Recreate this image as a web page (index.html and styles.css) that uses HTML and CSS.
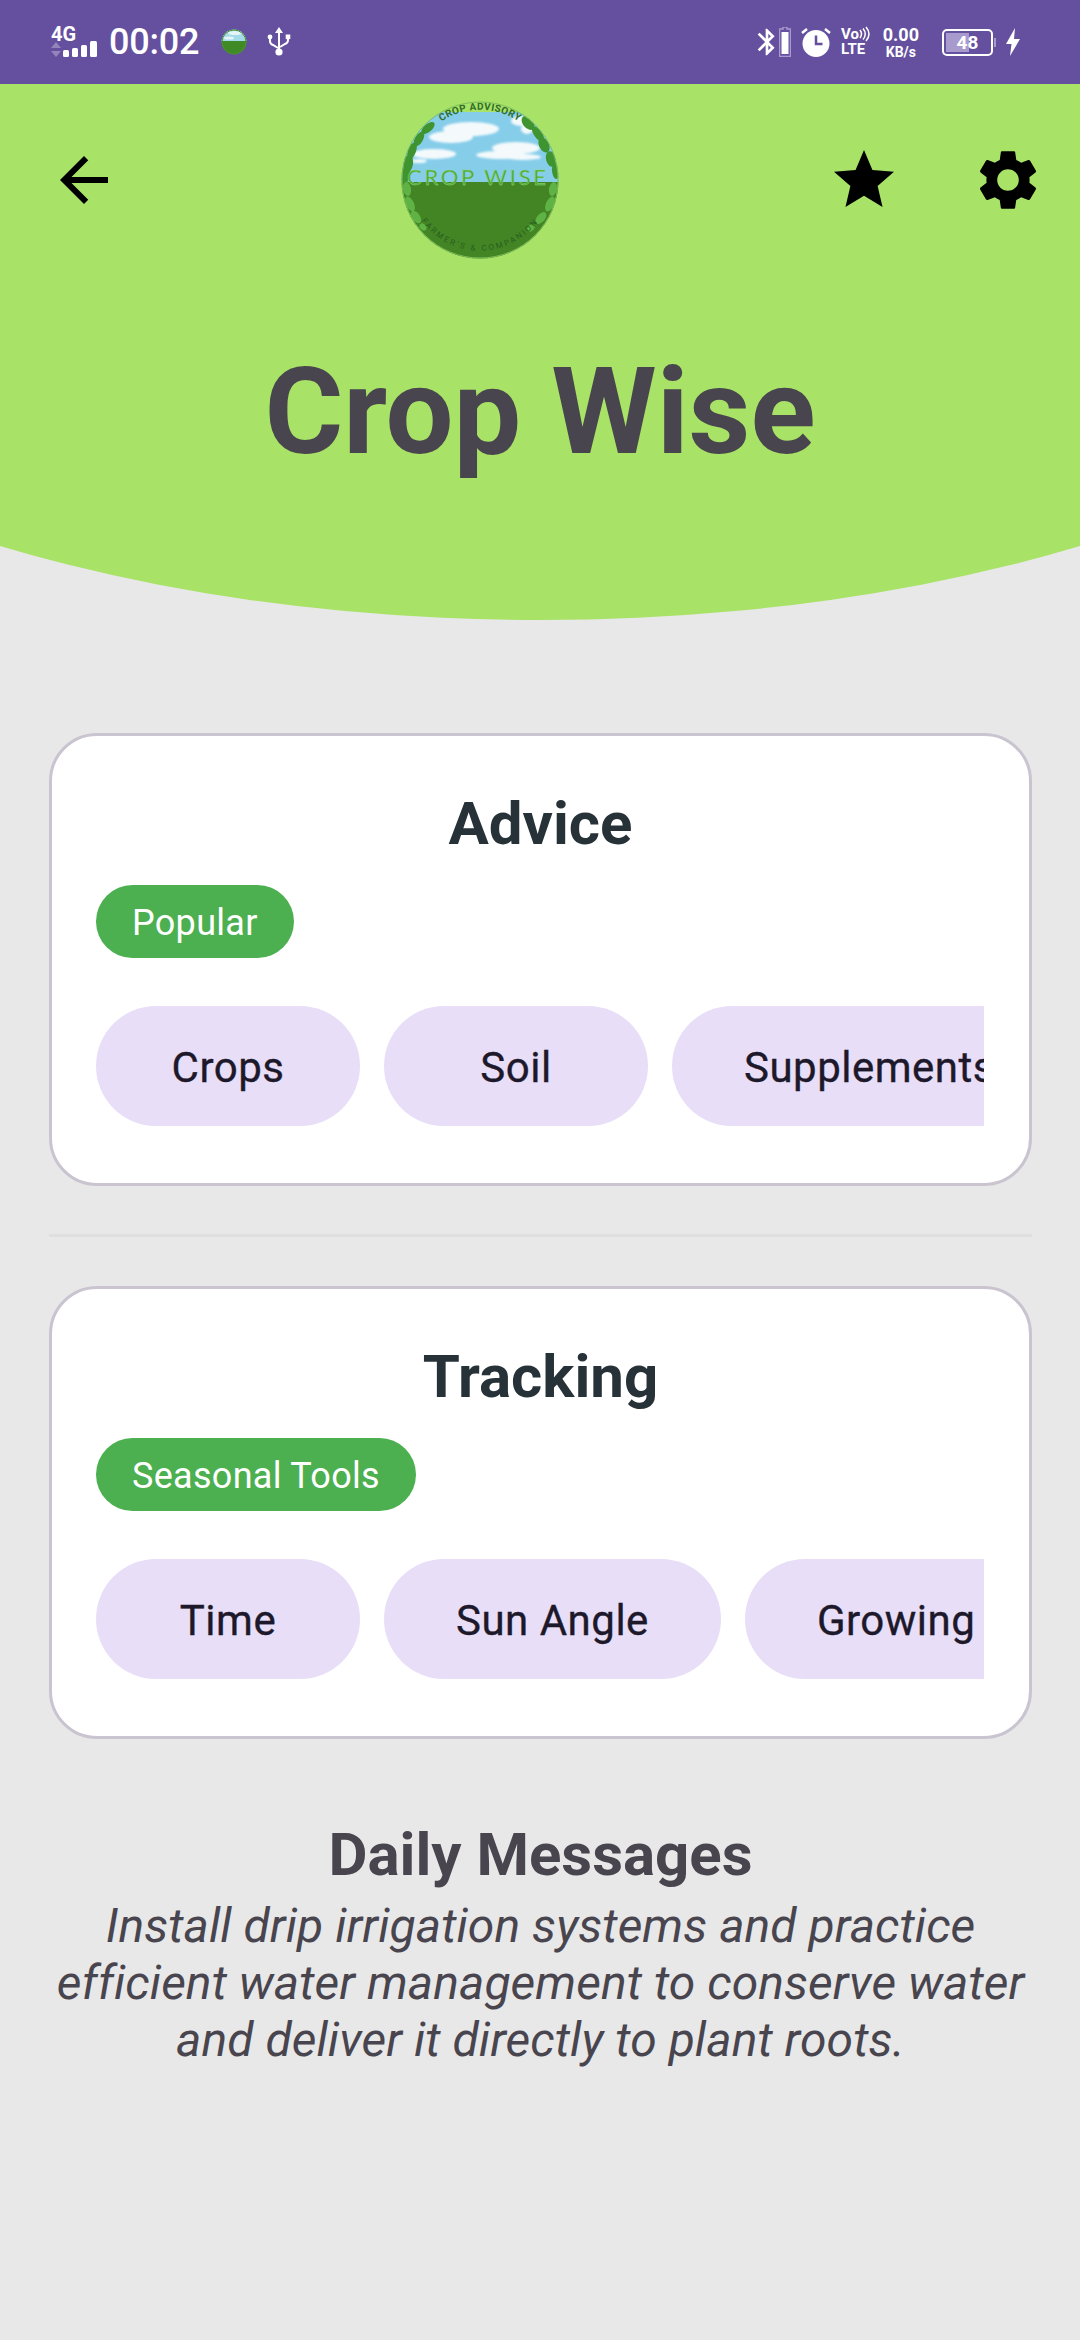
FILE: index.html
```html
<!DOCTYPE html>
<html>
<head lang="en">
    <meta charset="UTF-8">
    <title>Crop Wise</title>
    <link rel="stylesheet" href="styles.css">
</head>
<body>
    <div class="status-bar">
        <svg class="sb-net" width="48" height="34" viewBox="0 0 48 34">
            <text x="0" y="16" class="sb-4g">4G</text>
            <path d="M5 17l5 6H0zM5 32l5-6H0z" fill="#fff" opacity=".3"/>
            <rect x="12" y="25" width="6" height="7" rx="1.5" fill="#fff"/>
            <rect x="21" y="23" width="6" height="9" rx="1.5" fill="#fff"/>
            <rect x="30" y="20" width="6" height="12" rx="1.5" fill="#fff"/>
            <rect x="39" y="16" width="7" height="16" rx="1.5" fill="#fff"/>
        </svg>
        <span class="sb-time">00:02</span>
        <svg class="sb-mini" width="26" height="26" viewBox="0 0 26 26">
            <defs><clipPath id="miniClip"><circle cx="13" cy="13" r="12.5"/></clipPath></defs>
            <g clip-path="url(#miniClip)">
                <rect width="26" height="26" fill="#3f8a25"/>
                <rect width="26" height="12" fill="#a5dbe8"/>
                <ellipse cx="14" cy="4" rx="7" ry="2" fill="#e4f4f7"/>
                <ellipse cx="8" cy="9" rx="5" ry="1.500" fill="#e4f4f7"/>
            </g>
            <circle cx="13" cy="13" r="12" fill="none" stroke="#4f8f3a" stroke-width="1"/>
        </svg>
        <svg class="sb-usb" width="24" height="32" viewBox="0 0 24 32">
            <path d="M12 1l4 6h-3v17h-2V7H8z" fill="#fff"/>
            <circle cx="12" cy="26" r="3.6" fill="#fff"/>
            <path d="M3 11v4q0 3 3 4l5 3M21 11v3q0 3-3 4l-5 3" fill="none" stroke="#fff" stroke-width="2"/>
            <circle cx="3" cy="11" r="2.4" fill="#fff"/>
            <rect x="18.7" y="8.5" width="4.6" height="4.6" fill="#fff"/>
        </svg>

        <div class="sb-right">
            <svg class="sb-bt" width="32" height="32" viewBox="0 0 24 24">
                <path d="M17.71 7.71 12 2h-1v7.59L6.41 5 5 6.41 10.59 12 5 17.59 6.41 19 11 14.41V22h1l5.71-5.71-4.3-4.29 4.3-4.29zM13 5.83l1.88 1.88L13 9.59V5.83zm1.88 10.46L13 18.17v-3.76l1.88 1.88z" fill="#fff"/>
            </svg>
            <svg class="sb-cell" width="12" height="30" viewBox="0 0 12 30">
                <path d="M4 0h4v2h3.5v27.500H.5V2H4z" fill="none" stroke="#a99ace" stroke-width="1.500"/>
                <rect x="2.500" y="5" width="7" height="22" fill="#fff"/>
            </svg>
            <svg class="sb-alarm" width="30" height="30" viewBox="0 0 30 30">
                <circle cx="15" cy="16.500" r="13.500" fill="#fff"/>
                <path d="M15 8.500v8.500h6.500" fill="none" stroke="#65509f" stroke-width="2.500"/>
                <path d="M1 6l5-4M29 6l-5-4" fill="none" stroke="#fff" stroke-width="2.500"/>
            </svg>
            <svg class="sb-volte" width="30" height="30" viewBox="0 0 30 30">
                <text x="0" y="12" class="sb-vo">Vo</text>
                <path d="M19 3q3 4 0 8M22 1.500q4.500 5.500 0 11M25 0q6 7 0 14" fill="none" stroke="#fff" stroke-width="1.500"/>
                <text x="0" y="27" class="sb-lte">LTE</text>
            </svg>
            <div class="sb-speed">
                <span class="sb-speed-num">0.00</span>
                <span class="sb-speed-unit">KB/s</span>
            </div>
            <div class="sb-batt">
                <div class="sb-batt-body">
                    <div class="sb-batt-fill"></div>
                    <span class="sb-batt-num">48</span>
                </div>
                <div class="sb-batt-nub"></div>
            </div>
            <svg class="sb-bolt" width="14" height="28" viewBox="0 0 14 28">
                <path d="M9 0L0 16h5.500L4 28l10-17H8z" fill="#fff"/>
            </svg>
        </div>
    </div>

    <div class="header">
        <div class="top-row">
            <svg class="icon" viewBox="0 0 24 24">
                <path d="M20 11H7.830l5.590-5.590L12 4l-8 8 8 8 1.410-1.410L7.830 13H20v-2z"/>
            </svg>
            <svg class="logo" width="158" height="158" viewBox="0 0 158 158">
                <defs>
                    <clipPath id="logoClip"><circle cx="79" cy="79" r="78.500"/></clipPath>
                    <filter id="soft"><feGaussianBlur stdDeviation="1.200"/></filter>
                    <path id="arcTop" d="M33 26A70 70 0 0 1 125 26"/>
                    <path id="arcBottom" d="M18 116A72 72 0 0 0 140 116"/>
                </defs>
                <g clip-path="url(#logoClip)">
                    <rect width="158" height="158" fill="#a8e266"/>
                    <rect y="11" width="158" height="71" fill="#86cdea"/>
                    <rect y="81" width="158" height="77" fill="#438524"/>
                    <g fill="#f4fafc" filter="url(#soft)">
                        <ellipse cx="70" cy="28" rx="28" ry="7"/>
                        <ellipse cx="50" cy="36" rx="22" ry="6"/>
                        <ellipse cx="33" cy="53" rx="22" ry="5"/>
                        <ellipse cx="18" cy="60" rx="8" ry="2"/>
                        <ellipse cx="115" cy="47" rx="24" ry="6"/>
                        <ellipse cx="100" cy="54" rx="25" ry="4"/>
                        <ellipse cx="122" cy="56" rx="18" ry="3"/>
                        <ellipse cx="120" cy="20" rx="10" ry="5"/>
                        <ellipse cx="126" cy="28" rx="6" ry="5"/>
                    </g>
                    <!-- leaves along the rim -->
                    <g fill="#3f9430">
                        <ellipse cx="27" cy="27" rx="8" ry="4" transform="rotate(-40 27 27)"/>
                        <ellipse cx="18" cy="38" rx="8" ry="4" transform="rotate(-60 18 38)"/>
                        <ellipse cx="11" cy="50" rx="9" ry="4" transform="rotate(-70 11 50)"/>
                        <ellipse cx="7" cy="63" rx="9" ry="5" transform="rotate(-80 7 63)"/>
                        <ellipse cx="4" cy="74" rx="8" ry="5" transform="rotate(-85 4 74)"/>
                        <ellipse cx="127" cy="22" rx="8" ry="5" transform="rotate(50 127 22)"/>
                        <ellipse cx="137" cy="33" rx="9" ry="4" transform="rotate(55 137 33)"/>
                        <ellipse cx="143" cy="44" rx="8" ry="5" transform="rotate(65 143 44)"/>
                        <ellipse cx="150" cy="58" rx="8" ry="5" transform="rotate(75 150 58)"/>
                        <ellipse cx="155" cy="70" rx="8" ry="4" transform="rotate(85 155 70)"/>
                    </g>
                    <g fill="#5fb344">
                        <ellipse cx="6" cy="88" rx="7" ry="4" transform="rotate(80 6 88)"/>
                        <ellipse cx="9" cy="103" rx="8" ry="4" transform="rotate(65 9 103)"/>
                        <ellipse cx="15" cy="116" rx="7" ry="4" transform="rotate(55 15 116)"/>
                        <ellipse cx="152" cy="88" rx="7" ry="4" transform="rotate(-80 152 88)"/>
                        <ellipse cx="149" cy="103" rx="8" ry="4" transform="rotate(-65 149 103)"/>
                        <ellipse cx="140" cy="117" rx="7" ry="4" transform="rotate(-50 140 117)"/>
                        <ellipse cx="130" cy="127" rx="4" ry="3" transform="rotate(-45 130 127)"/>
                        <ellipse cx="22" cy="126" rx="4" ry="3" transform="rotate(45 22 126)"/>
                    </g>
                    <text x="6" y="84" textLength="139" class="logo-name">CROP WISE</text>
                    <text class="logo-arc-top"><textPath href="#arcTop" startOffset="50%">CROP ADVISORY</textPath></text>
                    <text class="logo-arc-bottom"><textPath href="#arcBottom" startOffset="50%">FARMER'S &amp; COMPANION</textPath></text>
                </g>
                <circle cx="79" cy="79" r="78" fill="none" stroke="#7dbd5c" stroke-width="1"/>
            </svg>
            <div class="actions">
                <svg class="icon" viewBox="0 0 24 24">
                    <path d="M12 17.270 18.180 21l-1.640-7.030L22 9.240l-7.190-.610L12 2 9.190 8.630 2 9.240l5.460 4.730L5.820 21z"/>
                </svg>
                <svg class="icon" viewBox="0 0 24 24">
                    <path d="M19.140 12.940c.04-.3.060-.610.060-.940 0-.320-.020-.640-.070-.940l2.030-1.580c.180-.140.230-.410.120-.610l-1.920-3.320c-.120-.220-.370-.290-.590-.220l-2.390.960c-.5-.380-1.030-.7-1.620-.94l-.360-2.540c-.040-.240-.240-.410-.480-.410h-3.840c-.240 0-.430.170-.47.410l-.360 2.540c-.590.240-1.130.570-1.620.94l-2.390-.960c-.220-.080-.470 0-.590.220L2.740 8.870c-.120.210-.080.470.120.610l2.030 1.580c-.050.3-.090.630-.090.940s.020.640.07.940l-2.030 1.580c-.180.140-.230.410-.12.610l1.920 3.320c.120.220.370.290.590.220l2.390-.960c.5.380 1.030.7 1.620.94l.36 2.54c.05.24.24.41.48.41h3.84c.24 0 .44-.17.47-.41l.36-2.54c.59-.24 1.13-.56 1.62-.94l2.39.96c.22.08.47 0 .59-.22l1.92-3.32c.12-.22.07-.47-.12-.61l-2.01-1.58zM12 15.600c-1.980 0-3.600-1.620-3.600-3.600s1.620-3.600 3.600-3.600 3.600 1.620 3.600 3.600-1.620 3.600-3.600 3.600z"/>
                </svg>
            </div>
        </div>
        <h1 class="app-title">Crop Wise</h1>
    </div>

    <div class="main">
        <div class="card">
            <h2 class="card-title">Advice</h2>
            <span class="tag">Popular</span>
            <div class="chips">
                <span class="chip">Crops</span>
                <span class="chip">Soil</span>
                <span class="chip">Supplements</span>
            </div>
        </div>

        <div class="divider"></div>

        <div class="card">
            <h2 class="card-title">Tracking</h2>
            <span class="tag">Seasonal Tools</span>
            <div class="chips">
                <span class="chip">Time</span>
                <span class="chip">Sun Angle</span>
                <span class="chip">Growing</span>
            </div>
        </div>

        <div class="daily">
            <h3 class="daily-title">Daily Messages</h3>
            <p class="daily-text">Install drip irrigation systems and practice efficient water management to conserve water and deliver it directly to plant roots.</p>
        </div>
    </div>
</body>
</html>
```

FILE: styles.css
```css
*{
    padding:0;
    margin:0;
    box-sizing: border-box;
}
html, body{
    height: 100%;
}
body{
    background: #e8e8e8;
    font-family: Roboto, "Liberation Sans", sans-serif;
    overflow: hidden;
}

/* status bar */
.status-bar{
    height: 84px;
    background: #65509f;
    color: #ffffff;
    display: flex;
    align-items: center;
    padding: 0 60px 0 51px;
}
.sb-net, .sb-volte{
    overflow: visible;
}
.sb-4g{
    font-size: 20px;
    font-weight: 700;
    fill: #ffffff;
}
.sb-time{
    font-size: 36px;
    font-weight: 500;
    letter-spacing: -0.2px;
    margin-left: 10px;
    line-height: 1;
}
.sb-mini{
    margin-left: 22px;
}
.sb-usb{
    margin-left: 20px;
}
.sb-right{
    margin-left: auto;
    display: flex;
    align-items: center;
}
.sb-bt{
    margin-right: -4px;
}
.sb-alarm{
    margin-left: 10px;
}
.sb-volte{
    margin-left: 10px;
}
.sb-vo{
    font-size: 15px;
    font-weight: 700;
    fill: #ffffff;
}
.sb-lte{
    font-size: 15px;
    font-weight: 700;
    fill: #ffffff;
}
.sb-speed{
    margin-left: 12px;
    display: flex;
    flex-direction: column;
    align-items: center;
    font-weight: 700;
    line-height: 1;
}
.sb-speed-num{
    font-size: 18px;
}
.sb-speed-unit{
    font-size: 14px;
    margin-top: 1px;
}
.sb-batt{
    margin-left: 23px;
    display: flex;
    align-items: center;
}
.sb-batt-body{
    width: 51px;
    height: 27px;
    border: 2px solid #ffffff;
    border-radius: 5px;
    position: relative;
    display: flex;
    align-items: center;
    justify-content: center;
}
.sb-batt-fill{
    position: absolute;
    left: 2px;
    top: 2px;
    bottom: 2px;
    width: 23px;
    background: #a99ace;
}
.sb-batt-num{
    position: relative;
    font-size: 19px;
    font-weight: 700;
}
.sb-batt-nub{
    width: 2px;
    height: 9px;
    background: #a99ace;
    margin-left: 1px;
}
.sb-bolt{
    margin-left: 10px;
}

/* header */
.header{
    height: 536px;
    background: #a8e266;
    clip-path: ellipse(1000px 467px at 50% 69px);
}
.top-row{
    display: flex;
    align-items: center;
    padding: 17px 36px 0 48px;
}
.icon{
    width: 72px;
    height: 72px;
    display: block;
    fill: #000000;
}
.logo{
    margin-left: 281px;
}
.logo-name{
    font-family: Lato, sans-serif;
    font-size: 22px;
    fill: #4fa83a;
    stroke: #8fdc72;
    stroke-width: 0.4px;
}
.logo-arc-top{
    font-size: 10px;
    font-weight: 700;
    letter-spacing: 0.4px;
    text-anchor: middle;
    fill: #2f6d2a;
}
.logo-arc-bottom{
    font-size: 8px;
    letter-spacing: 2.200px;
    text-anchor: middle;
    fill: #295e1f;
}
.actions{
    margin-left: auto;
    display: flex;
    gap: 72px;
}
.app-title{
    font-size: 120.500px;
    font-weight: 700;
    line-height: 140px;
    color: #49454f;
    text-align: center;
    margin-top: 83px;
}

/* cards */
.main{
    padding: 113px 48px 0 49px;
}
.card{
    height: 453px;
    background: #ffffff;
    border: 3px solid #cac4d0;
    border-radius: 48px;
    padding: 50px 44px 0;
}
.card-title{
    font-size: 60px;
    font-weight: 700;
    line-height: 76px;
    color: #263238;
    text-align: center;
}
.tag{
    display: inline-block;
    height: 73px;
    line-height: 70px;
    margin-top: 23px;
    padding: 3px 36px 0;
    border-radius: 37px;
    background: #4caf50;
    color: #ffffff;
    font-size: 36px;
    letter-spacing: 0.3px;
    vertical-align: top;
}
.chips{
    display: flex;
    gap: 24px;
    margin-top: 48px;
    width: 888px;
    overflow: hidden;
}
.chip{
    flex: none;
    min-width: 264px;
    height: 120px;
    line-height: 117px;
    padding: 3px 72px 0;
    border-radius: 60px;
    background: #e8def8;
    color: #1d192b;
    font-size: 42px;
    font-weight: 400;
    -webkit-text-stroke: 0.35px #1d192b;
    letter-spacing: 0.5px;
    text-align: center;
}
.divider{
    height: 3px;
    background: #dfdfdf;
    margin: 48px 0 49px;
}

/* daily message */
.daily{
    margin-top: 77px;
    text-align: center;
    color: #49454f;
}
.daily-title{
    font-size: 60px;
    font-weight: 700;
    line-height: 78px;
}
.daily-text{
    font-size: 48px;
    font-style: italic;
    line-height: 57px;
    letter-spacing: 0.06px;
    margin-top: 3px;
}
```
